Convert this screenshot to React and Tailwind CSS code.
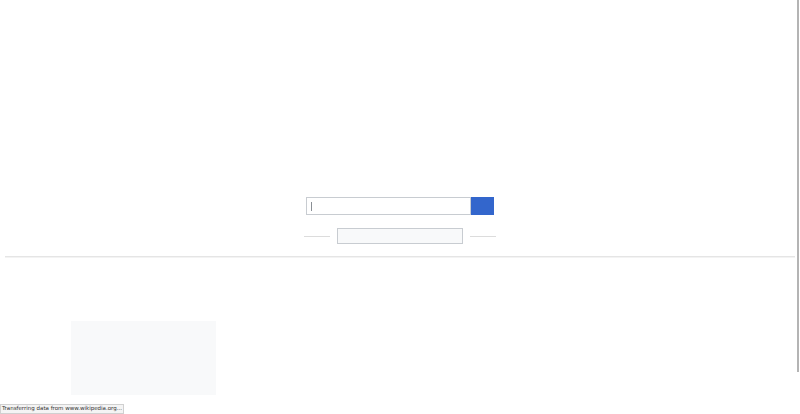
import React from "react";

const App = () => {
  return (
    <div
      className="relative w-[800px] h-[414px] overflow-hidden bg-white"
      style={{ fontFamily: '"DejaVu Sans", "Liberation Sans", sans-serif' }}
    >
      <div className="flex flex-col items-center pt-[197px]">
        {/* search row */}
        <div className="flex w-[188px] h-[18px]">
          <div className="flex items-center flex-1 border border-[#c8ccd1] bg-white pl-[4px]">
            <div className="w-px h-[9px] bg-[#8a8f95]" />
          </div>
          <button className="w-[23px] h-full bg-[#3366cc]" />
        </div>

        {/* language selector row */}
        <div className="flex items-center mt-[13px] gap-[7px]">
          <div className="w-[26px] h-px bg-[#dcdcdc]" />
          <div className="w-[126px] h-[16px] border border-[#c8ccd1] bg-[#f8f9fa]" />
          <div className="w-[26px] h-px bg-[#dcdcdc]" />
        </div>
      </div>

      {/* divider */}
      <div className="mx-[5px] mt-[12px] h-[2px] border-t border-[#e5e5e5] bg-[#f3f3f3]" />

      {/* placeholder card */}
      <div className="ml-[71px] mt-[63px] w-[145px] h-[74px] bg-[#f8f9fa]" />

      {/* scrollbar */}
      <div className="absolute right-[1px] top-0 w-[2px] h-[372px] bg-[#b4b4b4]" />

      {/* status bar */}
      <div className="absolute left-0 bottom-0 h-[10px] px-[1px] flex items-center border border-[#d0d0d0] bg-[#f4f4f4] text-[5.5px] leading-none text-[#333]">
        Transferring data from www.wikipedia.org...
      </div>
    </div>
  );
};

export default App;
